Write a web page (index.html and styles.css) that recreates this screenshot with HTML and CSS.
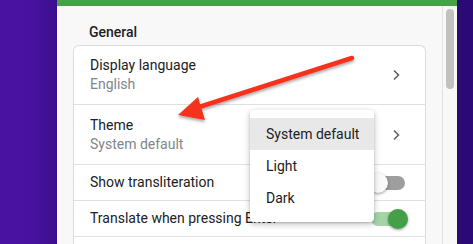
FILE: index.html
```html
<!DOCTYPE html>
<html>
<head>
<meta charset="utf-8">
<link rel="stylesheet" href="styles.css">
</head>
<body>
<div class="stage">
  <div class="bg-left"></div>
  <div class="panel">
    <div class="topbar"></div>
    <div class="panel-body">
      <div class="content">
        <div class="section-title">General</div>
        <div class="card">
          <div class="row tall">
            <div class="texts">
              <div class="label">Display language</div>
              <div class="sub">English</div>
            </div>
            <svg class="chev" width="10" height="12" viewBox="0 0 10 12"><path d="M3 1.5 L7.5 6 L3 10.5" fill="none" stroke="#5f6368" stroke-width="1.6"/></svg>
          </div>
          <div class="row tall">
            <div class="texts">
              <div class="label">Theme</div>
              <div class="sub">System default</div>
            </div>
            <svg class="chev" width="10" height="12" viewBox="0 0 10 12"><path d="M3 1.5 L7.5 6 L3 10.5" fill="none" stroke="#5f6368" stroke-width="1.6"/></svg>
          </div>
          <div class="row">
            <div class="label">Show transliteration</div>
            <div class="toggle off"><span class="track"></span><span class="knob"></span></div>
          </div>
          <div class="row">
            <div class="label">Translate when pressing Enter</div>
            <div class="toggle on"><span class="track"></span><span class="knob"></span></div>
          </div>
          <div class="row"></div>
        </div>
      </div>
      <div class="scrollbar"><div class="thumb"></div></div>
    </div>
  </div>
  <div class="bg-right"></div>

  <div class="menu">
    <div class="item selected">System default</div>
    <div class="item">Light</div>
    <div class="item">Dark</div>
  </div>

  <svg class="arrow" width="473" height="244" viewBox="0 0 473 244">
    <defs>
      <filter id="sh" x="-20%" y="-20%" width="140%" height="160%">
        <feDropShadow dx="0" dy="2" stdDeviation="1.5" flood-color="#000" flood-opacity="0.35"/>
      </filter>
    </defs>
    <g filter="url(#sh)" fill="#f6321c">
      <line x1="352" y1="58" x2="196" y2="108" stroke="#f6321c" stroke-width="4.5" stroke-linecap="round"/>
      <polygon points="178,115 198,97 205,120"/>
    </g>
  </svg>
</div>
</body>
</html>
```

FILE: styles.css
```css
* { box-sizing: border-box; }
html, body { margin: 0; padding: 0; }
body {
  font-family: Roboto, "Liberation Sans", sans-serif;
  width: 473px;
  height: 244px;
  overflow: hidden;
  background: #2b0a78;
}
.stage {
  position: relative;
  display: flex;
  width: 473px;
  height: 244px;
  overflow: hidden;
}
.bg-left {
  width: 57px;
  flex-shrink: 0;
  background: linear-gradient(to right, #4a12a2 0%, #4812a0 60%, #3a0f8c 100%);
}
.bg-right {
  width: 16px;
  flex-shrink: 0;
  background: #2b0a78;
}
.panel {
  width: 400px;
  flex-shrink: 0;
  display: flex;
  flex-direction: column;
  background: #f8f8f8;
  overflow: hidden;
}
.topbar {
  height: 6px;
  flex-shrink: 0;
  background: #45a247;
}
.panel-body {
  flex: 1;
  min-height: 0;
  display: flex;
  overflow: hidden;
}
.content {
  flex: 1;
  padding: 0 16px 0 16px;
}
.section-title {
  font-size: 14px;
  font-weight: 500;
  color: #202124;
  line-height: 20px;
  padding: 16px 0 0 16px;
  height: 39px;
}
.card {
  background: #fff;
  border: 1px solid #dadce0;
  border-bottom: none;
  border-radius: 6px 6px 0 0;
}
.row {
  display: flex;
  align-items: center;
  justify-content: space-between;
  height: 36px;
  padding: 0 17px 0 16px;
  border-bottom: 1px solid #e0e0e0;
}
.row.tall { height: 59px; padding-right: 24px; }
.row.tall + .row.tall { height: 60px; }
.texts { display: flex; flex-direction: column; }
.label {
  font-size: 14px;
  line-height: 19px;
  color: #202124;
}
.sub {
  font-size: 14px;
  line-height: 19px;
  color: #80868b;
}
.chev { display: block; }
.toggle {
  position: relative;
  width: 40px;
  height: 20px;
}
.toggle .track {
  position: absolute;
  left: 3px;
  top: 3px;
  width: 34px;
  height: 14px;
  border-radius: 7px;
}
.toggle .knob {
  position: absolute;
  top: 0;
  width: 20px;
  height: 20px;
  border-radius: 50%;
  box-shadow: 0 1px 3px rgba(0,0,0,0.4);
}
.toggle.off .track { background: #9e9e9e; }
.toggle.off .knob { left: 0; background: #fafafa; }
.toggle.on .track { background: #a5d4a7; }
.toggle.on .knob { left: 20px; background: #43a047; }
.scrollbar {
  width: 15px;
  flex-shrink: 0;
  border-left: 1px solid #e3e3e3;
  padding: 3px 3px 0 3px;
}
.thumb {
  width: 8px;
  height: 80px;
  border-radius: 4px;
  background: #c1c1c1;
}
.menu {
  position: absolute;
  left: 250px;
  top: 110px;
  width: 124px;
  padding: 8px 0;
  background: #fff;
  border-radius: 4px;
  box-shadow: 0 2px 6px rgba(0,0,0,0.25), 0 1px 2px rgba(0,0,0,0.15);
}
.menu .item {
  height: 32px;
  line-height: 32px;
  padding-left: 16px;
  font-size: 14px;
  color: #202124;
}
.menu .item.selected { background: #e8e8e8; }
.arrow {
  position: absolute;
  left: 0;
  top: 0;
  pointer-events: none;
}
```
